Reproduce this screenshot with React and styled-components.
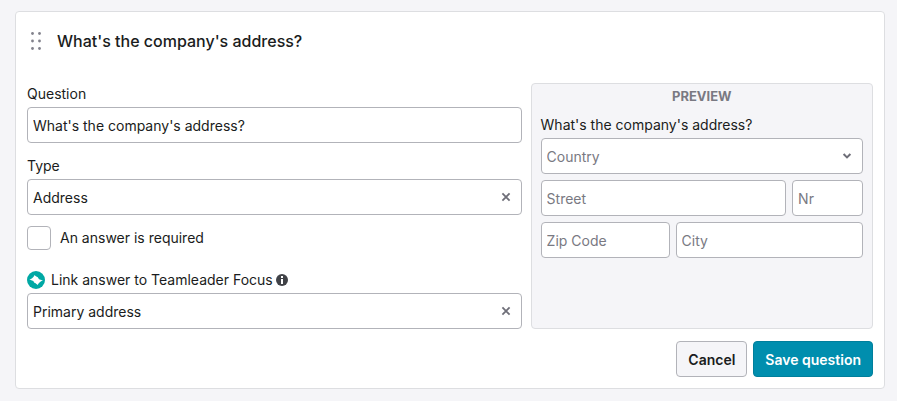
import { useState } from "react";
import styled, { createGlobalStyle } from "styled-components";

const GlobalStyle = createGlobalStyle`
  * {
    box-sizing: border-box;
  }

  body {
    margin: 0;
    background-color: #f5f5f8;
    color: #1a1c20;
    font-family: Inter, "Liberation Sans", sans-serif;
    font-size: 14px;
    line-height: 20px;
  }
`;

const Page = styled.main`
  padding: 11px 12px 12px 15px;
`;

const Card = styled.form`
  padding: 11px;
  background-color: white;
  border: 1px solid #dddee1;
  border-radius: 4px;
`;

const Header = styled.header`
  display: flex;
  align-items: center;
  gap: 12px;
  height: 36px;
  margin-bottom: 24px;
`;

const DragHandle = styled.button`
  display: flex;
  padding: 0;
  border: none;
  background: none;
  color: #82828c;
  cursor: grab;
`;

const Title = styled.h1`
  margin: 0;
  font-size: 16px;
  font-weight: 500;
`;

const Body = styled.div`
  display: grid;
  grid-template-columns: 13fr 9fr;
  gap: 9px;
`;

const Fields = styled.div`
  min-width: 0;
`;

const Field = styled.div`
  margin-bottom: ${(props) => (props.$last ? "0" : "12px")};
`;

const LabelRow = styled.div`
  display: flex;
  align-items: center;
  height: 24px;
  padding-bottom: 2px;
`;

const Label = styled.label``;

const BrandLogo = styled.svg`
  flex: none;
  margin-right: 6px;
`;

const InfoButton = styled.button`
  display: flex;
  margin-left: 3px;
  padding: 0;
  border: none;
  background: none;
  color: #404247;
`;

const Input = styled.input`
  display: block;
  flex: ${(props) => props.$basis || "1"};
  width: 100%;
  min-width: 0;
  height: 36px;
  padding: 0 5px;
  border: 1px solid #b2b3b9;
  border-radius: 4px;
  background-color: white;
  color: inherit;
  font: inherit;

  &::placeholder {
    color: #797982;
    opacity: 1;
  }
`;

const SelectWrapper = styled.div`
  position: relative;
  flex: 1;
`;

const Select = styled.select`
  display: block;
  width: 100%;
  height: 36px;
  padding: 2px 32px 0 5px;
  border: 1px solid #b2b3b9;
  border-radius: 4px;
  background-color: white;
  color: ${(props) => (props.$placeholder ? "#797982" : "#1a1c20")};
  font: inherit;
  appearance: none;
`;

const ClearButton = styled.button`
  position: absolute;
  top: 12px;
  right: 10px;
  display: flex;
  padding: 0;
  border: none;
  background: none;
  color: #6e6e78;
  cursor: pointer;
`;

const Chevron = styled.svg`
  position: absolute;
  top: 12px;
  right: 10px;
  color: #6e6e78;
  pointer-events: none;
`;

const CheckRow = styled.div`
  display: flex;
  align-items: center;
  gap: 9px;
  margin: -1px 0 19px;
`;

const Checkbox = styled.input`
  width: 24px;
  height: 24px;
  margin: 0;
  border: 1px solid #b2b3b9;
  border-radius: 4px;
  background-color: white;
  appearance: none;

  &:checked {
    background-color: #008eae;
  }
`;

const Preview = styled.section`
  min-width: 0;
  padding: 0 9px 9px;
  background-color: #f5f5f8;
  border: 1px solid #dddee1;
  border-radius: 4px;
`;

const PreviewTitle = styled.h2`
  margin: 0 0 6px;
  color: #797982;
  font-size: 13px;
  font-weight: 700;
  line-height: 24px;
  text-align: center;
`;

const PreviewRow = styled.div`
  display: flex;
  gap: 6px;
  margin-bottom: 6px;
`;

const Footer = styled.footer`
  display: flex;
  justify-content: flex-end;
  gap: 6px;
  margin-top: 12px;
`;

const Button = styled.button`
  height: 36px;
  padding: 2px 11px 0;
  border: 1px solid ${(props) => (props.$primary ? "#007f9c" : "#b2b3b9")};
  border-radius: 4px;
  background-color: ${(props) => (props.$primary ? "#008eae" : "#f5f5f8")};
  color: ${(props) => (props.$primary ? "white" : "#1a1c20")};
  font: inherit;
  font-weight: 600;
  cursor: pointer;
`;

const CrossIcon = () => (
  <svg width="12" height="12" viewBox="0 0 12 12" fill="none" stroke="currentColor" strokeWidth="1.8">
    <path d="M2.4 2.4l7.2 7.2M9.6 2.4l-7.2 7.2" />
  </svg>
);

const ClearableSelect = ({ id, options }) => {
  const [value, setValue] = useState(options[0]);

  return (
    <SelectWrapper>
      <Select id={id} value={value} onChange={(e) => setValue(e.target.value)}>
        <option value=""></option>
        {options.map((option) => (
          <option key={option}>{option}</option>
        ))}
      </Select>
      <ClearButton type="button" aria-label="Clear" onClick={() => setValue("")}>
        <CrossIcon />
      </ClearButton>
    </SelectWrapper>
  );
};

const App = () => {
  const [question, setQuestion] = useState("What's the company's address?");
  const [required, setRequired] = useState(false);

  return (
    <Page>
      <GlobalStyle />
      <Card onSubmit={(e) => e.preventDefault()}>
        <Header>
          <DragHandle type="button" aria-label="Move question">
            <svg width="18" height="18" viewBox="0 0 18 18" fill="currentColor">
              {[1.5, 9, 16.5].map((y) => (
                <g key={y}>
                  <circle cx="5.5" cy={y} r="1.4" />
                  <circle cx="12.5" cy={y} r="1.4" />
                </g>
              ))}
            </svg>
          </DragHandle>
          <Title>{question}</Title>
        </Header>
        <Body>
          <Fields>
            <Field>
              <LabelRow>
                <Label htmlFor="question">Question</Label>
              </LabelRow>
              <Input id="question" value={question} onChange={(e) => setQuestion(e.target.value)} />
            </Field>
            <Field>
              <LabelRow>
                <Label htmlFor="type">Type</Label>
              </LabelRow>
              <ClearableSelect id="type" options={["Address"]} />
            </Field>
            <CheckRow>
              <Checkbox
                id="required"
                type="checkbox"
                checked={required}
                onChange={(e) => setRequired(e.target.checked)}
              />
              <Label htmlFor="required">An answer is required</Label>
            </CheckRow>
            <Field $last>
              <LabelRow>
                <BrandLogo width="18" height="18" viewBox="0 0 18 18">
                  <circle cx="9" cy="9" r="9" fill="#00a8a4" />
                  <path
                    d="M7.6 4c.8 1 1.8 1.8 3.2 2.2l1.2 2 4 1.4c-2 .6-4 1.8-5.4 4.4-.9-1-1.9-1.8-3.3-2.2l-1-1.9-3.9-1.3C4.600 8 6.400 6.600 7.600 4z"
                    fill="white"
                  />
                </BrandLogo>
                <Label htmlFor="link">Link answer to Teamleader Focus</Label>
                <InfoButton type="button" aria-label="More information">
                  <svg width="12" height="12" viewBox="0 0 12 12">
                    <circle cx="6" cy="6" r="6" fill="currentColor" />
                    <path d="M5 2h2v2H5zM5 5h2v5H5z" fill="white" />
                  </svg>
                </InfoButton>
              </LabelRow>
              <ClearableSelect id="link" options={["Primary address"]} />
            </Field>
          </Fields>
          <Preview>
            <PreviewTitle>PREVIEW</PreviewTitle>
            <LabelRow>
              <Label htmlFor="country">{question}</Label>
            </LabelRow>
            <PreviewRow>
              <SelectWrapper>
                <Select id="country" $placeholder>
                  <option>Country</option>
                </Select>
                <Chevron width="12" height="12" viewBox="0 0 12 12" fill="none" stroke="currentColor" strokeWidth="2">
                  <path d="M2.6 4l3.4 3.4L9.4 4" />
                </Chevron>
              </SelectWrapper>
            </PreviewRow>
            <PreviewRow>
              <Input placeholder="Street" aria-label="Street" />
              <Input placeholder="Nr" aria-label="Nr" $basis="0 0 22%" />
            </PreviewRow>
            <PreviewRow>
              <Input placeholder="Zip Code" aria-label="Zip Code" $basis="0 0 40%" />
              <Input placeholder="City" aria-label="City" />
            </PreviewRow>
          </Preview>
        </Body>
        <Footer>
          <Button type="button">Cancel</Button>
          <Button type="submit" $primary>
            Save question
          </Button>
        </Footer>
      </Card>
    </Page>
  );
};

export default App;
